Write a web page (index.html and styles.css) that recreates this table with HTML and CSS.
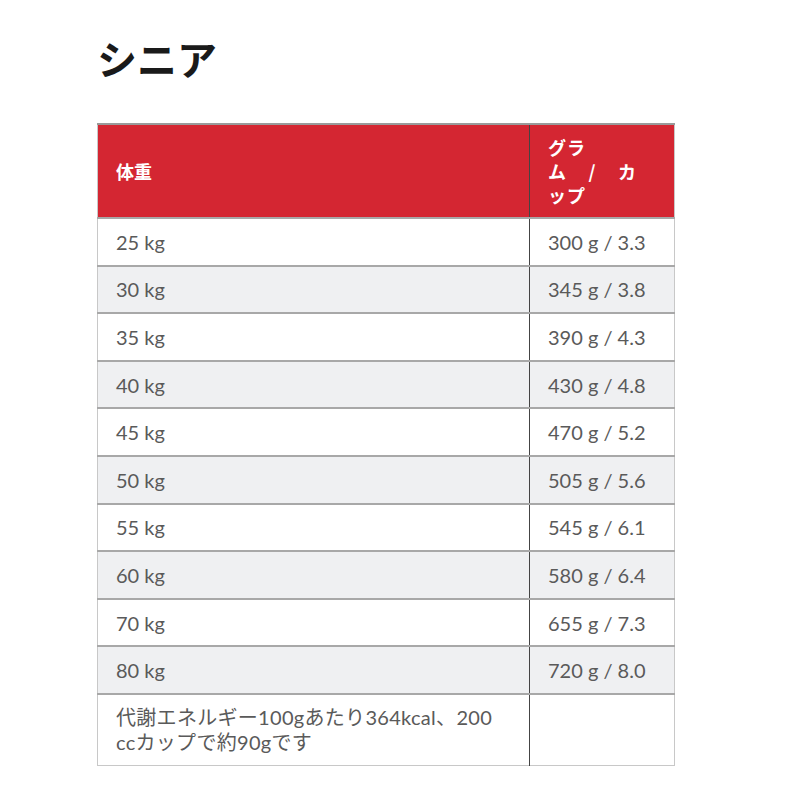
FILE: index.html
```
<!DOCTYPE html>
<html lang="ja">
<head>
<meta charset="utf-8">
<link rel="stylesheet" href="styles.css">
</head>
<body>
<div class="page">
  <h1 class="title">シニア</h1>
  <table class="feed">
    <thead>
      <tr>
        <th class="col-weight">体重</th>
        <th class="col-amount">
          <div class="hd-line">グラ</div>
          <div class="hd-line hd-spread"><span>ム</span><span>/</span><span>カ</span></div>
          <div class="hd-line">ップ</div>
        </th>
      </tr>
    </thead>
    <tbody>
      <tr><td>25 kg</td><td>300 g / 3.3</td></tr>
      <tr><td>30 kg</td><td>345 g / 3.8</td></tr>
      <tr><td>35 kg</td><td>390 g / 4.3</td></tr>
      <tr><td>40 kg</td><td>430 g / 4.8</td></tr>
      <tr><td>45 kg</td><td>470 g / 5.2</td></tr>
      <tr><td>50 kg</td><td>505 g / 5.6</td></tr>
      <tr><td>55 kg</td><td>545 g / 6.1</td></tr>
      <tr><td>60 kg</td><td>580 g / 6.4</td></tr>
      <tr><td>70 kg</td><td>655 g / 7.3</td></tr>
      <tr><td>80 kg</td><td>720 g / 8.0</td></tr>
      <tr class="note"><td class="note-text">代謝エネルギー100gあたり364kcal、200 ccカップで約90gです</td><td></td></tr>
    </tbody>
  </table>
</div>
</body>
</html>
```
FILE: styles.css
```
html, body {
  margin: 0;
  padding: 0;
  background: #ffffff;
}

.page {
  padding: 30px 0 0 97px;
  width: 578px;
  font-family: Lato, "Noto Sans CJK JP", sans-serif;
}

.title {
  margin: 0 0 37px 0;
  font-family: "Noto Sans CJK JP", sans-serif;
  font-weight: 700;
  font-size: 40px;
  line-height: 56px;
  color: #1a1a1a;
}

.feed {
  width: 578px;
  border-collapse: collapse;
  border: 1px solid #c8c8c8;
  border-top: 2px solid #9a9a9a;
}

.feed th {
  background: #d42632;
  color: #ffffff;
  font-family: "Noto Sans CJK JP", sans-serif;
  font-weight: 700;
  font-size: 18px;
  line-height: 24px;
  text-align: left;
  vertical-align: middle;
  padding: 10px 18px 10px 18px;
}

.col-weight {
  width: 395px;
}

.hd-line {
  letter-spacing: 1px;
}

.hd-spread {
  display: flex;
  justify-content: space-between;
  width: 88px;
  letter-spacing: 0;
}

.feed th + th,
.feed td + td {
  border-left: 1px solid #444444;
}

.feed td {
  font-size: 20px;
  line-height: 24px;
  color: #5a5a5a;
  padding: 10.8px 18px 10.8px 18px;
  border-top: 2px solid #a8a8a8;
  vertical-align: middle;
}

.feed tbody tr:nth-child(even) td {
  background: #eff0f2;
}

.feed tbody tr:nth-child(odd) td {
  background: #ffffff;
}

.note td {
  padding-top: 10px;
  padding-bottom: 10px;
  line-height: 25px;
}

.feed .note-text {
  padding-right: 30px;
  letter-spacing: 0.3px;
}
```
